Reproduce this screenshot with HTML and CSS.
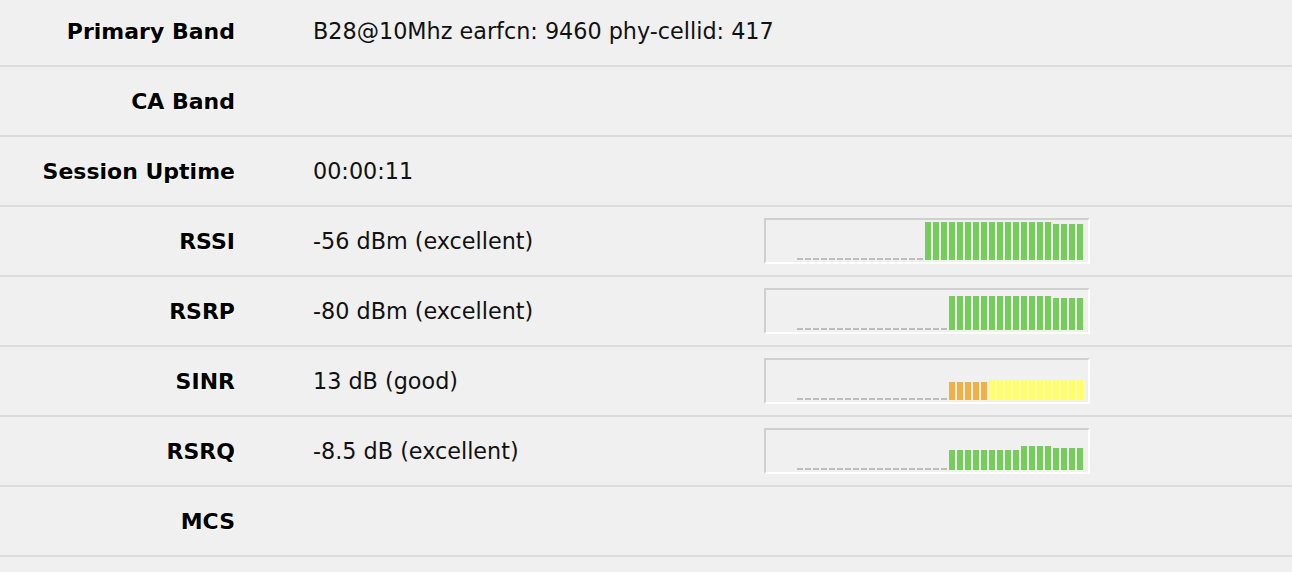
FILE: index.html
```html
<!DOCTYPE html>
<html>
<head>
<meta charset="utf-8">
<link rel="stylesheet" href="styles.css">
</head>
<body>
<div class="table">
  <div class="row"><div class="label">Primary Band</div><div class="value">B28@10Mhz earfcn: 9460 phy-cellid: 417</div></div>
  <div class="row"><div class="label">CA Band</div><div class="value"></div></div>
  <div class="row"><div class="label">Session Uptime</div><div class="value">00:00:11</div></div>
  <div class="row"><div class="label">RSSI</div><div class="value">-56 dBm (excellent)</div>
    <div class="graph" id="g-rssi"></div></div>
  <div class="row"><div class="label">RSRP</div><div class="value">-80 dBm (excellent)</div>
    <div class="graph" id="g-rsrp"></div></div>
  <div class="row"><div class="label">SINR</div><div class="value">13 dB (good)</div>
    <div class="graph" id="g-sinr"></div></div>
  <div class="row"><div class="label">RSRQ</div><div class="value">-8.5 dB (excellent)</div>
    <div class="graph" id="g-rsrq"></div></div>
  <div class="row"><div class="label">MCS</div><div class="value"></div></div>
</div>
<script src="script.js"></script>
</body>
</html>
```
FILE: styles.css
```css
html, body {
  margin: 0;
  padding: 0;
  background: #f0f0f0;
}
body {
  font-family: "DejaVu Sans", Verdana, sans-serif;
  color: #111;
  overflow: hidden;
}
.table {
  margin-top: -3px;
}
.row {
  display: grid;
  grid-template-columns: 235px 529px 326px;
  column-gap: 0;
  align-items: center;
  height: 68px;
  border-bottom: 2px solid #dcdcdc;
}
.label {
  text-align: right;
  font-weight: bold;
  font-size: 22px;
  color: #000;
  text-shadow: 1px 1px 0 #fff;
  white-space: nowrap;
}
.value {
  padding-left: 78px;
  font-size: 22.3px;
  white-space: nowrap;
}
.graph {
  box-sizing: border-box;
  height: 46px;
  border: 2px solid;
  border-color: #cfcfcf #fff #fff #cfcfcf;
  display: flex;
  align-items: flex-end;
  justify-content: flex-end;
  padding: 0 3px 2px 0;
}
.bar {
  width: 6px;
  margin-right: 2px;
  flex: none;
}
.bar.none { background: #bdbdbd; height: 2px; }
.bar.green { background: #76cd5c; }
.bar.orange { background: #efb143; }
.bar.yellow { background: #ffff6a; box-shadow: 2px 0 0 #fbfbb4; }
```
FILE: script.js
```js
var data = {
  'g-rssi': [[16,'none',2],[16,'green',38],[4,'green',36]],
  'g-rsrp': [[19,'none',2],[13,'green',34],[4,'green',32]],
  'g-sinr': [[19,'none',2],[5,'orange',18],[12,'yellow',20]],
  'g-rsrq': [[19,'none',2],[9,'green',20],[4,'green',24],[4,'green',22]]
};
Object.keys(data).forEach(function (id) {
  var g = document.getElementById(id);
  data[id].forEach(function (seg) {
    for (var i = 0; i < seg[0]; i++) {
      var b = document.createElement('div');
      b.className = 'bar ' + seg[1];
      b.style.height = seg[2] + 'px';
      g.appendChild(b);
    }
  });
});
```
